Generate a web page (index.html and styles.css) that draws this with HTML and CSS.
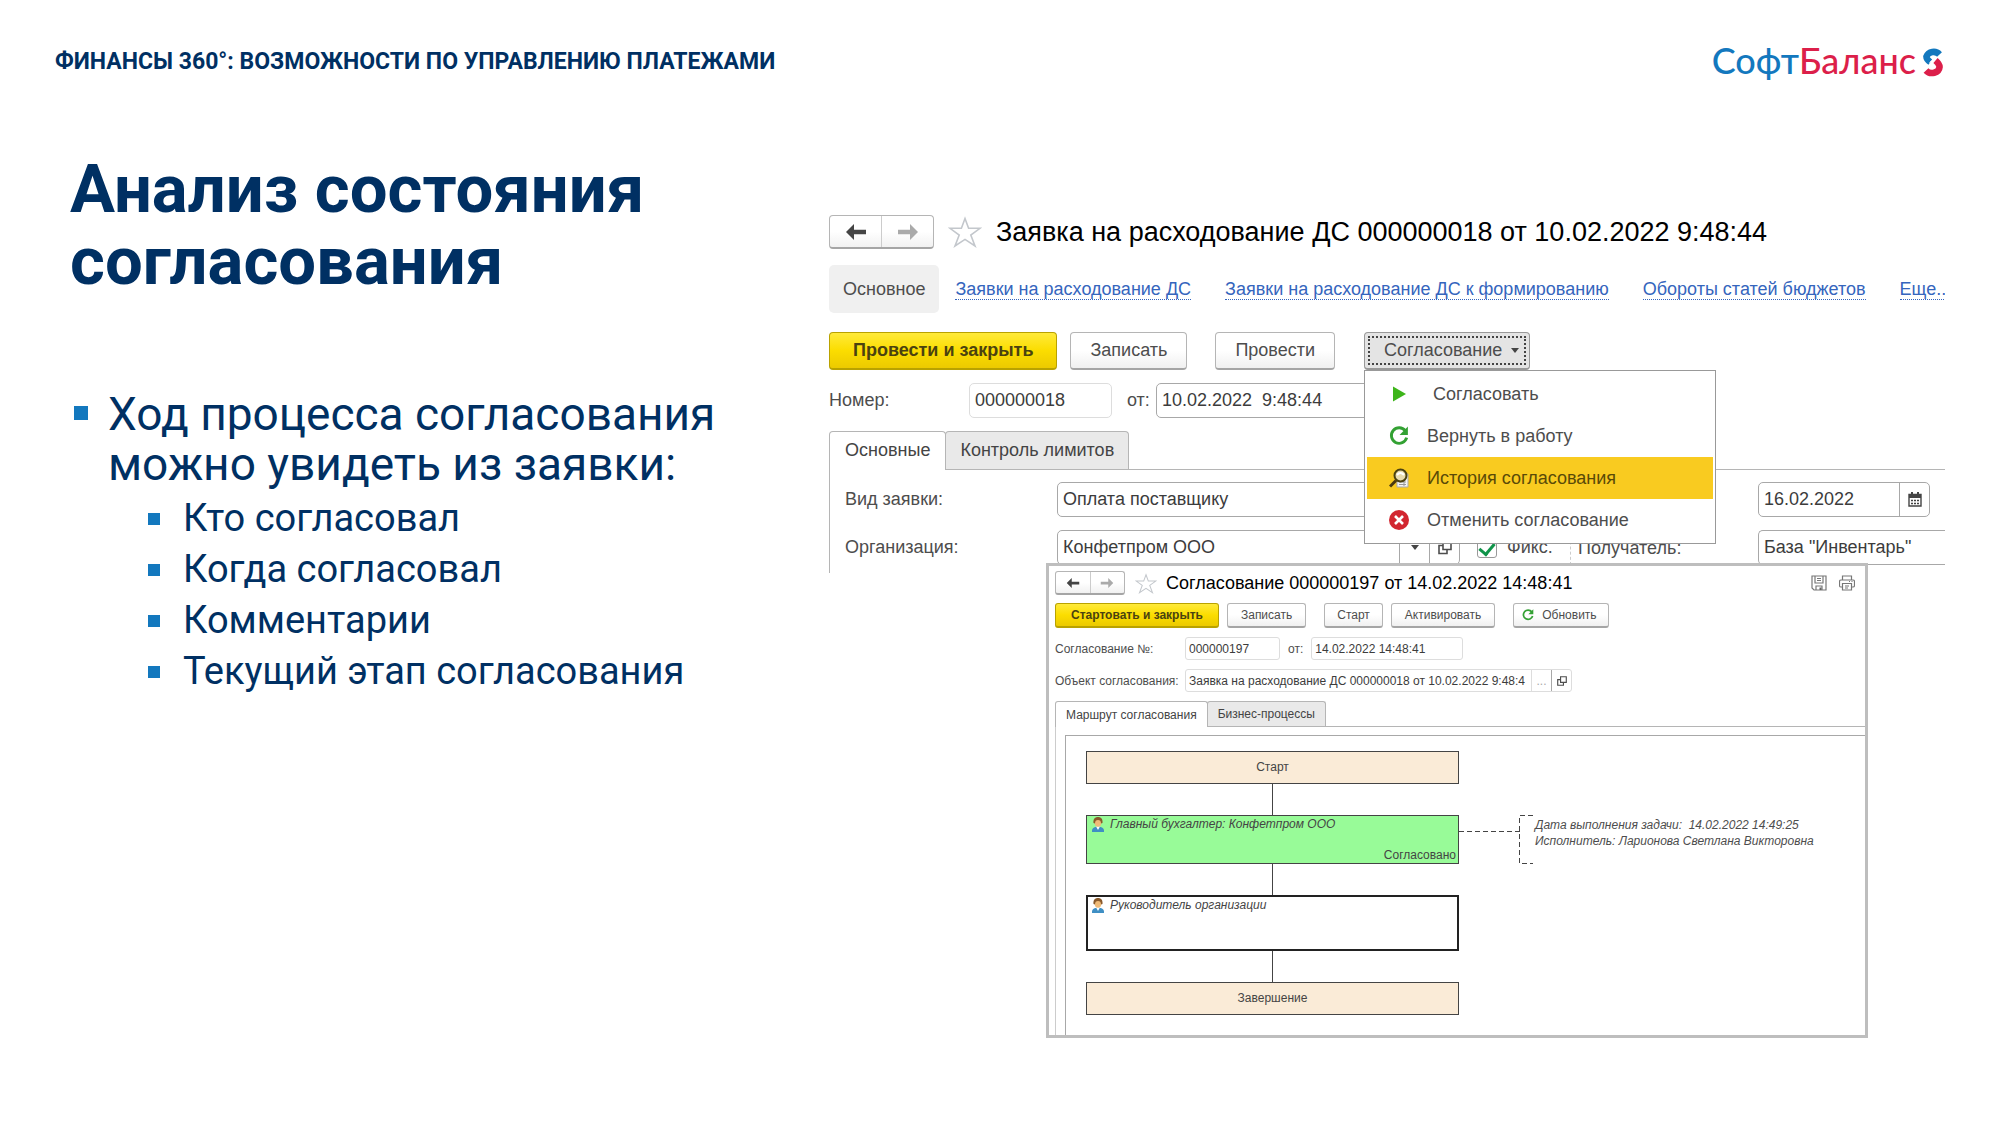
FILE: index.html
```html
<!DOCTYPE html>
<html lang="ru">
<head>
<meta charset="utf-8">
<meta name="viewport" content="width=device-width, initial-scale=1">
<title>Анализ состояния согласования</title>
<link rel="stylesheet" href="styles.css">
</head>
<body>
<svg class="defs" aria-hidden="true">
  <symbol id="i-back" viewBox="0 0 20 16"><path d="M0 8 8 0v5.800h12v4.400H8V16z" fill="currentColor"/></symbol>
  <symbol id="i-forward" viewBox="0 0 20 16"><path d="M20 8 12 0v5.800H0v4.400h12V16z" fill="currentColor"/></symbol>
  <symbol id="i-star" viewBox="0 0 34 32"><path d="M17 2.500 20.600 12.300h11.400l-9.200 6.700 4.200 11L17 23.400 7 30l4.200-11L2 12.300h11.400z" fill="#fff" stroke="#c3c7cc" stroke-width="1.600"/></symbol>
  <symbol id="i-refresh" viewBox="0 0 18 18"><path d="M14.700 4.300A7 7 0 1 0 15.900 10.500" fill="none" stroke="#33a133" stroke-width="2.600"/><path d="M17 .500V8H9.500z" fill="#33a133"/></symbol>
  <symbol id="i-open" viewBox="0 0 14 14"><path d="M5 1h8v8H5zM5 5H1v8h8V9" fill="none" stroke="currentColor" stroke-width="1.600"/></symbol>
  <symbol id="i-user" viewBox="0 0 12 15"><path d="M0 15v-1.500C0 11 2.500 9.700 6 9.700s6 1.300 6 3.800V15z" fill="#3f8fc4"/><path d="M4 9.500 6 13l2-3.500z" fill="#fff"/><ellipse cx="6" cy="5.500" rx="3.300" ry="4.200" fill="#f0bb78"/><path d="M1.500 6C1 2 3 0 6 0s5 2 4.500 6L9 6.500C9 4 8 3 6 3S3 4 3 6.500z" fill="#8a5a2b"/></symbol>
</svg>

<header class="top">
  <p class="top__section">ФИНАНСЫ 360°: ВОЗМОЖНОСТИ ПО УПРАВЛЕНИЮ ПЛАТЕЖАМИ</p>
  <div class="logo">
    <span class="logo__text"><span class="logo__blue">Софт</span><span class="logo__red">Баланс</span></span>
    <svg class="logo__mark" viewBox="0 0 22 30" aria-hidden="true">
      <path d="M17.500 7.500A7.600 7 0 0 0 4.400 9.600Q4.400 12.500 8.300 15.200" fill="none" stroke="#1378be" stroke-width="6.500"/>
      <path d="M4 23.500A7.600 6.500 0 0 0 17.600 20Q17.600 17 13.500 13.500" fill="none" stroke="#dc1f4a" stroke-width="6.500"/>
      <path d="M7.500 15.500 14.500 10" stroke="#fff" stroke-width="1"/>
    </svg>
  </div>
</header>

<main class="slide">
  <section class="story">
    <h1 class="story__title">Анализ состояния согласования</h1>
    <ul class="points">
      <li class="points__item">Ход процесса согласования можно увидеть из заявки:
        <ul class="subpoints">
          <li class="subpoints__item">Кто согласовал</li>
          <li class="subpoints__item">Когда согласовал</li>
          <li class="subpoints__item">Комментарии</li>
          <li class="subpoints__item">Текущий этап согласования</li>
        </ul>
      </li>
    </ul>
  </section>

  <div class="screens">
    <section class="request">
      <div class="titlebar">
        <div class="history">
          <button class="history__btn" aria-label="Назад"><svg><use href="#i-back"/></svg></button>
          <button class="history__btn history__btn--off" aria-label="Вперёд"><svg><use href="#i-forward"/></svg></button>
        </div>
        <svg class="star" aria-hidden="true"><use href="#i-star"/></svg>
        <h2 class="titlebar__text">Заявка на расходование ДС 000000018 от 10.02.2022 9:48:44</h2>
      </div>

      <nav class="links">
        <span class="links__current">Основное</span>
        <a href="#requests" class="links__a">Заявки на расходование ДС</a>
        <a href="#forming" class="links__a">Заявки на расходование ДС к формированию</a>
        <a href="#budget" class="links__a">Обороты статей бюджетов</a>
        <a href="#more" class="links__a">Еще..</a>
      </nav>

      <div class="toolbar">
        <button class="btn btn--primary">Провести и закрыть</button>
        <button class="btn">Записать</button>
        <button class="btn btn--apart">Провести</button>
        <div class="dropdown">
          <button class="btn btn--open" aria-expanded="true"><span class="btn__focus">Согласование<i class="caret"></i></span></button>
          <div class="menu">
            <button class="menu__item"><svg class="menu__icon" viewBox="0 0 20 20"><path d="M4 2.500 17 10 4 17.500z" fill="#3db51a"/></svg><span class="menu__label menu__label--first">Согласовать</span></button>
            <button class="menu__item"><svg class="menu__icon"><use href="#i-refresh"/></svg>Вернуть в работу</button>
            <button class="menu__item menu__item--active"><svg class="menu__icon" viewBox="0 0 20 20"><path d="M8 6h11v13H8z" fill="#f4f4f4" stroke="#aaa"/><path d="M10 14h7M10 16.500h7M15 12v6" stroke="#999"/><circle cx="11.500" cy="7.500" r="6" fill="#e8dcae" stroke="#4b4210" stroke-width="2"/><path d="M8 7q3.500-4 7 0" fill="none" stroke="#fff" stroke-width="2"/><path d="M7 12.500 1 18.500" stroke="#4b3a10" stroke-width="3"/></svg>История согласования</button>
            <button class="menu__item"><svg class="menu__icon" viewBox="0 0 20 20"><circle cx="10" cy="10" r="10" fill="#d22630"/><path d="m6 6 8 8m0-8-8 8" stroke="#fff" stroke-width="2.600"/></svg>Отменить согласование</button>
          </div>
        </div>
      </div>

      <div class="numrow">
        <label class="numrow__label" for="num">Номер:</label>
        <input class="field field--soft numrow__num" id="num" value="000000018">
        <label class="numrow__from" for="date">от:</label>
        <input class="field numrow__date" id="date" value="10.02.2022  9:48:44">
      </div>

      <div class="tabs">
        <button class="tabs__tab tabs__tab--active">Основные</button>
        <button class="tabs__tab">Контроль лимитов</button>
      </div>
      <div class="form">
        <label for="kind">Вид заявки:</label>
        <input class="field" id="kind" value="Оплата поставщику">
        <div class="combo combo--date">
          <input class="combo__input" id="pay" aria-label="Дата оплаты" value="16.02.2022">
          <button class="combo__btn" aria-label="Календарь"><svg class="combo__icon" viewBox="0 0 14 15"><path d="M1 2.500h12V14H1z" fill="#fff" stroke="#444" stroke-width="1.400"/><path d="M1 2h12v4H1zM3 0h2v3H3zM9 0h2v3H9z" fill="#444"/><path d="M3 8.500h8M3 11.500h8" stroke="#444" stroke-width="1.600" stroke-dasharray="2 1"/></svg></button>
        </div>
        <label for="org">Организация:</label>
        <div class="combo">
          <input class="combo__input" id="org" value="Конфетпром ООО">
          <button class="combo__btn" aria-label="Выбрать"><i class="caret"></i></button>
          <button class="combo__btn" aria-label="Открыть"><svg class="combo__icon"><use href="#i-open"/></svg></button>
        </div>
        <label class="fix"><input class="fix__box" type="checkbox" checked>Фикс.</label>
        <label class="form__payee" for="payee">Получатель:</label>
        <input class="field field--cut" id="payee" value="База &quot;Инвентарь&quot;">
      </div>
    </section>

    <section class="approval">
      <div class="titlebar titlebar--small">
        <div class="history history--small">
          <button class="history__btn" aria-label="Назад"><svg><use href="#i-back"/></svg></button>
          <button class="history__btn history__btn--off" aria-label="Вперёд"><svg><use href="#i-forward"/></svg></button>
        </div>
        <svg class="star star--small" aria-hidden="true"><use href="#i-star"/></svg>
        <h2 class="titlebar__text">Согласование 000000197 от 14.02.2022 14:48:41</h2>
        <div class="tools">
          <button class="tools__btn" aria-label="Сохранить"><svg viewBox="0 0 16 16"><path d="M1 1h14v14H3l-2-2zM4 1v7h8V1M5 15v-4h6v4M6 3.500h4M6 5.500h4" fill="none" stroke="#777" stroke-width="1.200"/><path d="M8.500 12.500h2V15h-2z" fill="#666"/></svg></button>
          <button class="tools__btn" aria-label="Печать"><svg viewBox="0 0 16 16"><path d="M3.500 5V1h9v4M3.500 12H2q-1.500 0-1.500-1.500v-4Q.500 5 2 5h12q1.500 0 1.500 1.500v4Q15.500 12 14 12h-1.500M3.500 8.500h9V15h-9zM6 11h4M6 13h3M10 6.500h1M12.500 6.500h1" fill="none" stroke="#777" stroke-width="1.200"/></svg></button>
        </div>
      </div>

      <div class="toolbar toolbar--small">
        <button class="btn btn--small btn--primary">Стартовать и закрыть</button>
        <button class="btn btn--small">Записать</button>
        <button class="btn btn--small btn--apart">Старт</button>
        <button class="btn btn--small">Активировать</button>
        <button class="btn btn--small btn--apart btn--icon"><svg class="btn__icon"><use href="#i-refresh"/></svg>Обновить</button>
      </div>

      <div class="props">
        <label for="apnum">Согласование №:</label>
        <div class="props__row">
          <input class="field field--small field--soft props__num" id="apnum" value="000000197">
          <label for="apdate">от:</label>
          <input class="field field--small field--soft props__date" id="apdate" value="14.02.2022 14:48:41">
        </div>
        <label for="object">Объект согласования:</label>
        <div class="combo combo--small">
          <input class="combo__input" id="object" value="Заявка на расходование ДС 000000018 от 10.02.2022 9:48:4">
          <button class="combo__btn combo__btn--dots" aria-label="Выбрать">...</button>
          <button class="combo__btn" aria-label="Открыть"><svg class="combo__icon"><use href="#i-open"/></svg></button>
        </div>
      </div>

      <div class="tabs tabs--small">
        <button class="tabs__tab tabs__tab--active">Маршрут согласования</button>
        <button class="tabs__tab">Бизнес-процессы</button>
      </div>
      <div class="route">
        <div class="canvas">
          <div class="node node--edge">Старт</div>
          <div class="wire"></div>
          <div class="step">
            <div class="node node--done">
              <svg class="node__user" aria-hidden="true"><use href="#i-user"/></svg>
              <span class="node__name">Главный бухгалтер: Конфетпром ООО</span>
              <span class="node__state">Согласовано</span>
            </div>
            <svg class="bracket" viewBox="0 0 74 49" aria-hidden="true"><path d="M0 16.500h61M74 .500H60.500V48.500H74" fill="none" stroke="#444" stroke-dasharray="5 3"/></svg>
            <p class="note">Дата выполнения задачи:&nbsp; 14.02.2022 14:49:25<br>Исполнитель: Ларионова Светлана Викторовна</p>
          </div>
          <div class="wire"></div>
          <div class="node node--next">
            <svg class="node__user" aria-hidden="true"><use href="#i-user"/></svg>
            <span class="node__name">Руководитель организации</span>
          </div>
          <div class="wire"></div>
          <div class="node node--edge">Завершение</div>
        </div>
      </div>
    </section>
  </div>
</main>
</body>
</html>
```
FILE: styles.css
```css
* { box-sizing: border-box; }

body {
  margin: 0;
  background: #fff;
  color: #003063;
  font-family: Roboto, "Noto Sans", sans-serif;
}

h1, h2, p, ul { margin: 0; padding: 0; }
ul { list-style: none; }
svg { display: block; }
.defs { position: absolute; width: 0; height: 0; }

button, input {
  font: inherit;
  color: inherit;
}

button { padding: 0; cursor: pointer; }

/* Header */
.top {
  display: flex;
  justify-content: space-between;
  align-items: flex-start;
  padding: 40px 56px 0 55px;
}

.top__section {
  font-size: 23px;
  line-height: 44px;
  font-weight: 700;
}

.logo {
  display: flex;
  align-items: center;
  gap: 6px;
}

.logo__text {
  font-family: Lato, "Noto Sans", sans-serif;
  font-size: 36px;
  font-weight: 500;
  line-height: 40px;
  padding-bottom: 4px;
}

.logo__blue { color: #1378be; }
.logo__red { color: #dc1f4a; }
.logo__mark { width: 22px; height: 30px; }

/* Page columns */
.slide {
  display: grid;
  grid-template-columns: minmax(0, 774fr) minmax(0, 1116fr);
  align-items: start;
  padding: 69px 55px 0;
}

.story { padding-left: 15px; }

.story__title {
  max-width: 640px;
  font-size: 67px;
  line-height: 72px;
  font-weight: 700;
}

.points { padding-top: 92px; }

.points__item {
  position: relative;
  max-width: 680px;
  padding-left: 38px;
  font-size: 46px;
  line-height: 50px;
}

.points__item::before,
.subpoints__item::before {
  content: "";
  position: absolute;
  left: 4px;
  top: 17px;
  width: 14px;
  height: 14px;
  background: #1378be;
}

.subpoints {
  display: grid;
  padding: 4px 0 0 38px;
}

.subpoints__item {
  position: relative;
  padding-left: 37px;
  font-size: 38px;
  line-height: 51px;
}

.subpoints__item::before {
  left: 2px;
  top: 20px;
  width: 12px;
  height: 12px;
}

/* Application windows */
.screens {
  padding-top: 62px;
  font-family: "Liberation Sans", Arial, sans-serif;
  color: #4d4d4d;
}

.request {
  position: relative;
  font-size: 18px;
  white-space: nowrap;
}

.titlebar {
  display: flex;
  align-items: center;
  height: 34px;
  color: #000;
}

.titlebar__text {
  font-size: 27px;
  line-height: 34px;
  font-weight: 400;
}

.history {
  display: flex;
  flex: none;
  width: 105px;
  height: 34px;
  border: 1px solid #b5b5b5;
  border-bottom: 2px solid #a5a5a5;
  border-radius: 4px;
  background: linear-gradient(#fff 50%, #f1f1f1);
}

.history__btn {
  flex: 1;
  display: grid;
  place-items: center;
  border: 0;
  background: none;
  color: #444;
}

.history__btn svg { width: 20px; height: 16px; }
.history__btn--off { color: #aaa; border-left: 1px solid #ccc; }
.star { flex: none; width: 34px; height: 32px; margin: 0 14px; }

.links {
  display: flex;
  align-items: center;
  gap: 34px;
  padding-top: 16px;
  overflow: hidden;
}

.links__current {
  padding: 0 14px;
  margin-right: -18px;
  border-radius: 5px;
  background: #f0f0f0;
  line-height: 48px;
}

.links__a {
  color: #3565bd;
  text-decoration: none;
  border-bottom: 1px dotted #3565bd;
  line-height: 20px;
}

.toolbar {
  display: flex;
  gap: 13px;
  padding-top: 19px;
}

.btn {
  height: 38px;
  padding: 0 19px;
  border: 1px solid #b5b5b5;
  border-bottom: 2px solid #a5a5a5;
  border-radius: 4px;
  background: linear-gradient(#fff 50%, #f0f0f0);
  white-space: nowrap;
}

.btn--primary {
  padding: 0 23px;
  border-color: #b9a200;
  background: linear-gradient(#ffea3a, #fbdd00 50%, #ecca00);
  color: #4a4210;
  font-weight: 700;
}

.btn--apart { margin-left: 15px; }

.dropdown { position: relative; margin-left: 16px; }

.btn--open {
  padding: 3px;
  background: #e4e4e4;
  border-color: #999;
}

.btn__focus {
  display: flex;
  align-items: center;
  gap: 9px;
  height: 29px;
  padding: 0 5px 0 14px;
  border: 2px dotted #444;
}

.caret {
  border: 4px solid transparent;
  border-top: 5px solid #444;
  border-bottom: 0;
}

.menu {
  position: absolute;
  z-index: 2;
  top: 38px;
  left: 0;
  width: 352px;
  padding: 2px;
  border: 1px solid #999;
  background: #fff;
}

.menu__item {
  display: flex;
  align-items: center;
  gap: 18px;
  width: 100%;
  height: 42px;
  padding-left: 22px;
  border: 0;
  background: none;
}

.menu__item--active { background: #f9cb20; color: #5a4a08; }
.menu__icon { width: 20px; height: 20px; }
.menu__label--first { padding-left: 6px; }

.numrow {
  display: flex;
  align-items: center;
  padding-top: 13px;
}

.numrow__label { width: 140px; }
.numrow__num { width: 143px; }
.numrow__from { width: 44px; padding-left: 15px; }
.numrow__date { width: 260px; white-space: pre; }

.field {
  min-width: 0;
  height: 35px;
  padding: 0 5px;
  border: 1px solid #a8a8a8;
  border-radius: 5px;
  background: #fff;
  color: #3c3c3c;
}

.field--soft { border-color: #ddd; }
.field--cut { border-right: 0; border-radius: 5px 0 0 5px; }

.tabs {
  display: flex;
  padding-top: 13px;
  border-bottom: 1px solid #b5b5b5;
}

.tabs__tab {
  height: 38px;
  padding: 0 14px;
  border: 1px solid #b5b5b5;
  border-bottom: 0;
  border-radius: 4px 4px 0 0;
  background: #e9e9e9;
  color: #444;
}

.tabs__tab--active {
  margin: 0 -1px -1px 0;
  padding: 0 15px 1px;
  height: 39px;
  background: #fff;
}

.form {
  display: grid;
  grid-template-columns: 212px 403px 110px 188px minmax(0, 1fr);
  row-gap: 13px;
  align-items: center;
  padding: 12px 0 8px 15px;
  border-left: 1px solid #b5b5b5;
}

.form__payee { padding-left: 7px; border-left: 1px dashed #ccc; line-height: 34px; }

.combo {
  display: flex;
  height: 35px;
  border: 1px solid #a8a8a8;
  border-radius: 5px;
  background: #fff;
}

.combo--date { grid-column: 5; width: 172px; }

.combo__input {
  flex: 1;
  min-width: 0;
  width: 0;
  padding: 0 5px;
  border: 0;
  background: none;
  color: #3c3c3c;
}

.combo__btn {
  display: grid;
  place-items: center;
  flex: none;
  width: 30px;
  border: 0;
  border-left: 1px solid #a8a8a8;
  background: none;
}

.combo__icon { width: 14px; height: 15px; }

.fix { display: flex; align-items: center; gap: 10px; padding-left: 17px; }

.fix__box {
  appearance: none;
  width: 20px;
  height: 20px;
  margin: 0;
  border: 1px solid #999;
  border-radius: 3px;
  display: grid;
  place-items: center;
}

.fix__box:checked::before {
  content: "";
  width: 7px;
  height: 12px;
  border: solid #10944a;
  border-width: 0 3px 3px 0;
  transform: rotate(40deg);
}

/* Approval window */
.approval {
  position: relative;
  z-index: 1;
  margin: -10px 77px 0 217px;
  padding: 5px 0 0 6px;
  border: 3px solid #bebebe;
  background: #fff;
  font-size: 12px;
  white-space: nowrap;
}

.titlebar--small { height: 24px; }
.titlebar--small .titlebar__text { font-size: 18px; line-height: 24px; }
.history--small { width: 70px; height: 24px; border-radius: 3px; }
.history--small svg { width: 14px; height: 10px; }
.star--small { width: 22px; height: 21px; margin: 0 9px 0 10px; }

.tools { display: flex; gap: 12px; margin-left: auto; padding-right: 10px; }
.tools__btn { border: 0; background: none; }
.tools__btn svg { width: 16px; height: 16px; }

.toolbar--small { gap: 8px; padding-top: 8px; }
.btn--small { height: 25px; padding: 0 13px; border-radius: 3px; }
.btn--small.btn--primary { padding: 0 15px; }
.btn--small.btn--apart { margin-left: 10px; padding: 0 12px; }
.btn--small.btn--icon { display: flex; align-items: center; gap: 8px; padding: 0 11px 0 8px; }
.btn__icon { width: 12px; height: 12px; }

.props {
  display: grid;
  grid-template-columns: 130px 387px;
  row-gap: 9px;
  align-items: center;
  padding-top: 9px;
}

.props__row { display: flex; align-items: center; gap: 8px; }
.props__num { width: 95px; }
.props__date { width: 152px; }
.field--small { height: 23px; padding: 0 3px; border-radius: 3px; }

.combo--small { height: 23px; border-color: #ddd; border-radius: 3px; }
.combo--small .combo__input { padding: 0 0 0 3px; }
.combo--small .combo__btn { width: 20px; }
.combo--small .combo__icon { width: 10px; height: 10px; }
.combo--small .combo__btn--dots { border-color: #ddd; color: #aaa; }

.tabs--small { padding-top: 9px; }
.tabs--small .tabs__tab { height: 25px; padding: 0 10px; border-radius: 3px 3px 0 0; }
.tabs--small .tabs__tab--active { height: 26px; }

.route {
  padding: 8px 0 0 9px;
  border-left: 1px solid #ccc;
}

.canvas {
  padding: 15px 0 20px 20px;
  border: solid #a8a8a8;
  border-width: 1px 0 0 1px;
}

.node {
  position: relative;
  width: 373px;
  border: 1px solid #444;
  color: #444;
}

.node--edge {
  height: 33px;
  background: #faebd7;
  line-height: 31px;
  text-align: center;
}

.node--done {
  flex: none;
  display: grid;
  grid-template-columns: 16px 1fr;
  height: 49px;
  padding: 0 2px 0 5px;
  background: #98fb98;
}

.node--next {
  display: grid;
  grid-template-columns: 16px 1fr;
  height: 56px;
  padding: 0 4px;
  border: 2px solid #222;
}

.node__user { width: 12px; height: 15px; margin-top: 1px; }
.node__name { padding-left: 2px; font-style: italic; line-height: 16px; }
.node__state { grid-column: 1 / 3; align-self: end; text-align: right; line-height: 16px; }

.wire {
  width: 373px;
  height: 31px;
  background: linear-gradient(#444, #444) center / 1px 100% no-repeat;
}

.step { display: flex; }
.bracket { flex: none; width: 74px; height: 49px; }

.note {
  padding: 2px 0 0 2px;
  font-style: italic;
  line-height: 16px;
}
```
